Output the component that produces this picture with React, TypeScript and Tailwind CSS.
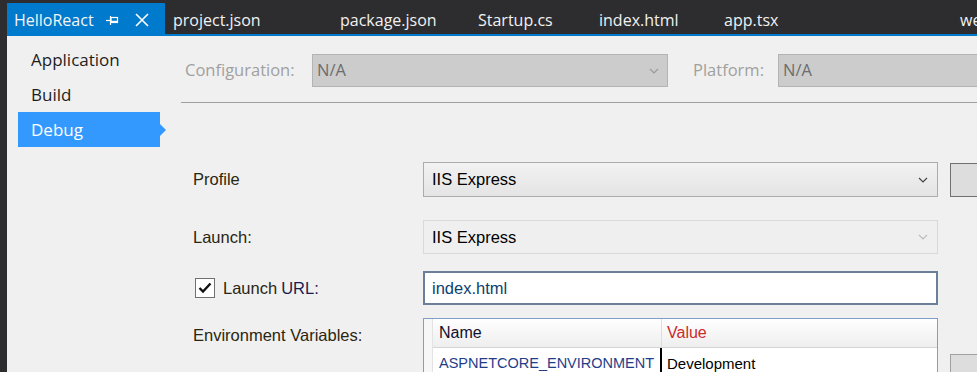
import React from "react";

const tabs = [
  { name: "project.json", w: "w-[167px]" },
  { name: "package.json", w: "w-[138px]" },
  { name: "Startup.cs", w: "w-[121px]" },
  { name: "index.html", w: "w-[125px]" },
  { name: "app.tsx", w: "w-[236px]" },
  { name: "webpack.config.js", w: "w-[160px]" },
];

const Chevron: React.FC<{ className?: string }> = ({ className }) => (
  <svg width="10" height="6" viewBox="0 0 10 6" className={className}>
    <path d="M1 1 L5 5 L9 1" fill="none" stroke="currentColor" strokeWidth="1.2" />
  </svg>
);

const Pin = () => (
  <svg width="13" height="11" viewBox="0 0 13 11">
    <path d="M0 5.5 H4.5" stroke="#fff" strokeWidth="1.2" />
    <path d="M4.5 1 V10" stroke="#fff" strokeWidth="1.2" />
    <rect x="5" y="2.5" width="6.5" height="5" fill="none" stroke="#fff" strokeWidth="1.2" />
    <path d="M5 6.5 H11.5" stroke="#fff" strokeWidth="1.5" />
  </svg>
);

const Close = () => (
  <svg width="14" height="14" viewBox="0 0 14 14">
    <path d="M1 1 L13 13 M13 1 L1 13" stroke="#fff" strokeWidth="1.6" />
  </svg>
);

const label = "text-[16.5px] text-[#2a2610] w-[230px] shrink-0";

export default function App() {
  return (
    <div
      className="w-[977px] h-[372px] overflow-hidden flex bg-[#2d2d30]"
      style={{ fontFamily: '"Segoe UI", "Open Sans", "Noto Sans", sans-serif' }}
    >
      <div className="w-[7px] shrink-0" />
      <div className="flex-1 flex flex-col min-w-0">
        {/* tab strip */}
        <div className="h-[34px] flex items-end shrink-0 overflow-hidden">
          <div className="h-[31px] w-[158px] shrink-0 bg-[#007acc] flex items-center pl-[7px] pt-[3px] text-[16px] text-[#f4f4f4]">
            <span>HelloReact</span>
            <span className="ml-[12px] mt-[1px] flex"><Pin /></span>
            <span className="ml-[16px] flex"><Close /></span>
          </div>
          {tabs.map((t) => (
            <div
              key={t.name}
              className={`${t.w} shrink-0 h-[31px] flex items-center pl-[8px] pt-[3px] text-[16px] text-[#f1f1f1] whitespace-nowrap`}
            >
              {t.name}
            </div>
          ))}
        </div>
        <div className="h-[2px] bg-[#007acc] shrink-0" />

        {/* content */}
        <div className="flex-1 bg-[#f0f0f0] flex min-h-0">
          {/* left nav */}
          <div className="w-[174px] shrink-0 pt-[6px] pl-[11px] flex flex-col text-[17px] text-[#1e1e1e]">
            <div className="h-[35px] shrink-0 flex items-center pl-[13px]">Application</div>
            <div className="h-[35px] shrink-0 flex items-center pl-[13px]">Build</div>
            <div className="h-[35px] shrink-0 w-[142px] flex items-center pl-[13px] bg-[#3399ff] text-white relative">
              Debug
              <span className="absolute right-[-6px] top-[12px] w-0 h-0 border-y-[6px] border-y-transparent border-l-[6px] border-l-[#3399ff]" />
            </div>
          </div>

          {/* right panel */}
          <div className="flex-1 flex flex-col min-w-0">
            <div className="mt-[18px] shrink-0 flex items-center h-[33px] pl-[4px] whitespace-nowrap">
              <span className="w-[127px] shrink-0 text-[16.5px] text-[#a0a0a0]">Configuration:</span>
              <div className="w-[356px] shrink-0 h-[33px] bg-[#cccccc] border border-[#b4b4b4] flex items-center pl-[4px] pr-[8px] justify-between text-[16.5px] text-[#6d6d6d]">
                N/A
                <Chevron className="text-[#9a9a9a]" />
              </div>
              <span className="ml-[25px] w-[85px] shrink-0 text-[16.5px] text-[#a0a0a0]">Platform:</span>
              <div className="w-[220px] shrink-0 h-[33px] bg-[#cccccc] border border-[#b4b4b4] flex items-center pl-[4px] text-[16.5px] text-[#6d6d6d]">
                N/A
              </div>
            </div>
            <div className="mt-[15px] h-px shrink-0 bg-[#a0a0a0]" />

            <div className="pl-[12px] flex flex-col shrink-0" style={{ fontFamily: '"Liberation Sans", Arial, sans-serif' }}>
              {/* Profile */}
              <div className="mt-[59px] shrink-0 flex items-center h-[35px]">
                <span className={label}>Profile</span>
                <div className="w-[515px] shrink-0 h-[35px] border border-[#acacac] bg-gradient-to-b from-[#f2f2f2] to-[#e4e4e4] flex items-center justify-between pl-[8px] pr-[9px] text-[16.5px] text-black">
                  IIS Express
                  <Chevron className="text-[#444]" />
                </div>
                <div className="ml-[12px] shrink-0 w-[40px] h-[34px] bg-[#dddddd] border border-[#707070]" />
              </div>

              {/* Launch */}
              <div className="mt-[23px] shrink-0 flex items-center h-[34px]">
                <span className={label}>Launch:</span>
                <div className="w-[515px] shrink-0 h-[34px] border border-[#d9d9d9] bg-[#efefef] flex items-center justify-between pl-[8px] pr-[9px] text-[16.5px] text-black">
                  IIS Express
                  <Chevron className="text-[#bdbdbd]" />
                </div>
              </div>

              {/* Launch URL */}
              <div className="mt-[17px] shrink-0 flex items-center h-[34px]">
                <span className={`${label} flex items-center`}>
                  <span className="ml-[2px] mr-[8px] w-[20px] h-[20px] border border-[#707070] bg-white flex items-center justify-center">
                    <svg width="14" height="12" viewBox="0 0 14 12">
                      <path d="M1.5 6 L5 9.5 L12.5 1.5" fill="none" stroke="#111" strokeWidth="2.4" />
                    </svg>
                  </span>
                  Launch <span className="ml-[4px] text-[#1b1b50]">URL:</span>
                </span>
                <div className="w-[515px] shrink-0 h-[34px] border-2 border-[#6c7f98] bg-white flex items-center pl-[7px] text-[16.5px] text-[#0e3f6e]">
                  index.html
                </div>
              </div>

              {/* Environment Variables */}
              <div className="mt-[13px] shrink-0 flex items-start">
                <span className={`${label} pt-[5px]`}>Environment Variables:</span>
                <div className="w-[515px] shrink-0 h-[80px] border border-[#7f9ec8] bg-white flex flex-col text-[16px]">
                  <div className="h-[29px] flex shrink-0">
                    <div className="w-[9px] bg-[#f7f7f7] border-r border-[#e3e3e3]" />
                    <div className="w-[229px] flex items-center pl-[6px] bg-gradient-to-b from-white to-[#eeeeee] border-r border-[#dedede] border-b border-b-[#d5d5d5] text-[#101030]">
                      Name
                    </div>
                    <div className="flex-1 flex items-center pl-[5px] bg-gradient-to-b from-white to-[#eeeeee] border-b border-[#d5d5d5] text-[#cc2a2a]">
                      Value
                    </div>
                  </div>
                  <div className="h-[26px] flex shrink-0">
                    <div className="w-[9px] bg-[#f7f7f7] border-r border-[#e3e3e3]" />
                    <div className="w-[229px] flex items-center pl-[6px] pt-[6px] text-[14.5px] text-[#1f3e8a] border-r-2 border-black whitespace-nowrap overflow-hidden">
                      ASPNETCORE_ENVIRONMENT
                    </div>
                    <div className="flex-1 flex items-center pl-[5px] pt-[6px] text-[15px] text-black">
                      Development
                    </div>
                  </div>
                </div>
                <div className="ml-[12px] mt-[36px] shrink-0 w-[40px] h-[34px] bg-[#dddddd] border border-[#a0a0a0]" />
              </div>
            </div>
          </div>
        </div>
      </div>
    </div>
  );
}
